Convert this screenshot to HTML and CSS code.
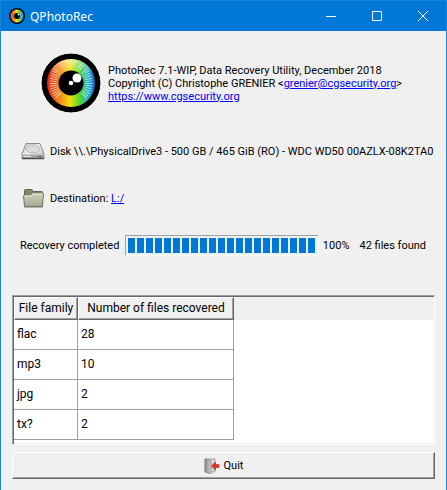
FILE: index.html
```
<!DOCTYPE html>
<html lang="en">
  <head>
    <meta charset="UTF-8">
    <title>QPhotoRec</title>
    <link rel="stylesheet" href="styles.css">
  </head>
  <body>
  <svg width="0" height="0" class="defs">
    <defs>
      <linearGradient id="iris">
        <stop offset="0" stop-color="#e3241c"/>
        <stop offset="0.25" stop-color="#f5821f"/>
        <stop offset="0.48" stop-color="#f2e00c"/>
        <stop offset="0.68" stop-color="#4fd82c"/>
        <stop offset="0.85" stop-color="#22b4c8"/>
        <stop offset="1" stop-color="#2260d0"/>
      </linearGradient>
      <linearGradient id="shine" x2="0" y2="1">
        <stop offset="0" stop-color="#fff" stop-opacity="0.6"/>
        <stop offset="0.3" stop-color="#fff" stop-opacity="0"/>
      </linearGradient>
      <linearGradient id="metal" x2="1" y2="1">
        <stop offset="0" stop-color="#c4c4c4"/>
        <stop offset="0.5" stop-color="#f2f2f2"/>
        <stop offset="1" stop-color="#b4b4b4"/>
      </linearGradient>
      <linearGradient id="folder" x2="0" y2="1">
        <stop offset="0" stop-color="#d2d3bf"/>
        <stop offset="1" stop-color="#a5a78f"/>
      </linearGradient>
      <linearGradient id="door">
        <stop offset="0" stop-color="#8a8a8a"/>
        <stop offset="1" stop-color="#d0d0d0"/>
      </linearGradient>
    </defs>
  </svg>
  <div class="window">
    <header class="titlebar">
      <svg class="app-icon" viewBox="0 0 16 16">
        <circle cx="8" cy="8" r="8" fill="#000"/>
        <circle cx="8" cy="8" r="6.2" fill="url(#iris)" stroke="#fff" stroke-opacity="0.4"/>
        <circle cx="8" cy="8" r="3" fill="#000"/>
        <circle cx="9.6" cy="6.5" r="1" fill="#fff"/>
      </svg>
      <span class="title">QPhotoRec</span>
      <button class="win-btn" aria-label="Minimize"><svg viewBox="0 0 10 10"><path d="M0 5.5h10"/></svg></button>
      <button class="win-btn" aria-label="Maximize"><svg viewBox="0 0 10 10"><path d="M.5.5h9v9h-9z"/></svg></button>
      <button class="win-btn" aria-label="Close"><svg viewBox="0 0 10 10"><path d="M0 0l10 10M10 0L0 10"/></svg></button>
    </header>

    <main>
      <section class="about">
        <svg class="logo" viewBox="0 0 60 60">
          <circle cx="30" cy="30" r="30" fill="#000" stroke="#fff"/>
          <circle cx="30" cy="30" r="24" fill="url(#iris)"/>
          <circle cx="30" cy="30" r="24" fill="url(#shine)"/>
          <!-- iris rays -->
          <g fill="none" stroke="#fff" stroke-opacity="0.75" stroke-width="7" stroke-dasharray="0.7 1.5">
            <path d="M17.3 42.7A18 18 0 0 1 17.3 17.3"/>
            <path d="M42.7 42.7A18 18 0 0 0 42.7 17.3"/>
            <path d="M38 13.900A18 18 0 0 1 41 15.800"/>
          </g>
          <circle cx="30" cy="30" r="12.500" fill="#000"/>
          <circle cx="36" cy="25" r="4.5" fill="#fff"/>
          <circle cx="30" cy="30" r="2.3" fill="#fff"/>
        </svg>
        <p>
          PhotoRec 7.1-WIP, Data Recovery Utility, December 2018<br>
          Copyright (C) Christophe GRENIER &lt;<a href="mailto:grenier@cgsecurity.org">grenier@cgsecurity.org</a>&gt;<br>
          <a href="https://www.cgsecurity.org">https://www.cgsecurity.org</a>
        </p>
      </section>

      <div class="row">
        <svg class="icon" viewBox="0 0 24 24">
          <path d="M5 4.500h14l4 10.500v4.500H1V15z" fill="url(#metal)" stroke="#8c8c8c"/>
          <path d="M1.500 15.500h21v3.500h-21z" fill="#a8a8a8"/>
          <path d="M1 19.500h22" stroke="#4c4c4c" stroke-width="1.500"/>
          <ellipse cx="12" cy="10" rx="7" ry="4" fill="#dedede" stroke="#b6b6b6"/>
          <ellipse cx="12" cy="10" rx="2" ry="1" fill="#fff" stroke="#aaa" stroke-width="0.500"/>
          <path d="M3 17.500h7" stroke="#ececec"/>
          <path d="M17 17.500h4" stroke="#666"/>
        </svg>
        <span>Disk \\.\PhysicalDrive3 - 500 GB / 465 GiB (RO) - WDC WD50 00AZLX-08K2TA0</span>
      </div>

      <div class="row">
        <svg class="icon" viewBox="0 0 24 24">
          <path d="M3.500 20V4.500q0-1 1-1h6q1 0 1 1v1h9q1 0 1 1V20z" fill="#84866f" stroke="#62634f"/>
          <path d="M2.500 10q0-1 1-1h6l2-2h10q1 0 1 1l-1 12.500h-18z" fill="url(#folder)" stroke="#77786a"/>
          <path d="M3.500 10h6.500l2-2h9.500" fill="none" stroke="#e7e8da"/>
          <path d="M3 21.500h19" stroke="#b4b4b0"/>
        </svg>
        <span>Destination: <a href="#">L:/</a></span>
      </div>

      <div class="status">
        <label for="recovery">Recovery completed</label>
        <progress id="recovery" value="100" max="100"></progress>
        <span class="percent">100%</span>
        <span>42 files found</span>
      </div>

      <div class="files">
        <table>
          <thead>
            <tr><th class="family">File family</th><th class="count">Number of files recovered</th><td></td></tr>
          </thead>
          <tbody>
            <tr><td>flac</td><td>28</td></tr>
            <tr><td>mp3</td><td>10</td></tr>
            <tr><td>jpg</td><td>2</td></tr>
            <tr><td>tx?</td><td>2</td></tr>
          </tbody>
        </table>
      </div>

      <button class="quit">
        <svg viewBox="0 0 16 16">
          <path d="M1 1h10v13H1z" fill="#d8d8d8" stroke="#a0a0a0"/>
          <path d="M1 1l6 1.500V16L1 14z" fill="url(#door)" stroke="#777" stroke-width="0.600"/>
          <path d="M7.500 8l4-4v2.500H15v3h-3.500V12z" fill="#e2382b" stroke="#b52318" stroke-width="0.600"/>
        </svg>
        Quit
      </button>
    </main>
  </div>
  </body>
</html>
```
FILE: styles.css
```
* {
  box-sizing: border-box;
}

body {
  margin: 0;
  background-color: #f0f0f0;
  color: #000;
  font-family: Roboto, "Noto Sans", sans-serif;
  font-size: 11px;
  line-height: 13px;
}

a {
  color: #0000ff;
}

.defs {
  position: absolute;
}

.window {
  display: flex;
  flex-direction: column;
  min-height: 100vh;
  border: 1px solid #1883d7;
  background-color: #f0f0f0;
}

.titlebar {
  display: flex;
  align-items: center;
  height: 30px;
  padding-left: 8px;
  background-color: #0078d7;
  color: #fff;
}

.app-icon {
  width: 16px;
  height: 16px;
}

.title {
  flex: 1;
  margin-left: 5px;
  font-family: "Noto Sans", sans-serif;
  font-size: 12px;
}

.win-btn {
  width: 46px;
  height: 30px;
  padding: 0;
  border: 0;
  background: none;
}

.win-btn svg {
  display: block;
  width: 10px;
  height: 10px;
  margin: 0 auto;
  overflow: visible;
  fill: none;
  stroke: #fff;
}

main {
  flex: 1;
  display: flex;
  flex-direction: column;
  padding: 22px 11px 11px;
}

.about {
  display: flex;
  align-items: center;
  gap: 7px;
  padding-left: 29px;
  margin-bottom: 26px;
  white-space: nowrap;
}

.about p {
  margin: 0;
}

.logo {
  flex-shrink: 0;
  width: 60px;
  height: 60px;
  overflow: visible;
}

.row {
  display: flex;
  align-items: center;
  gap: 5px;
  height: 24px;
  padding-left: 9px;
  margin-bottom: 23px;
  white-space: nowrap;
}

.icon {
  flex-shrink: 0;
  width: 24px;
  height: 24px;
}

.status {
  display: flex;
  align-items: center;
  padding: 0 9px 0 8px;
  margin: 2px 0 39px;
  white-space: nowrap;
}

progress {
  appearance: none;
  flex: 1;
  min-width: 0;
  height: 21px;
  margin: 0 4px 0 6px;
  padding: 2px;
  border: 1px solid;
  border-color: #a0a0a0 #fff #fff #a0a0a0;
  background-color: #f0f0f0;
}

progress::-webkit-progress-bar {
  background-color: #f0f0f0;
}

progress::-webkit-progress-value {
  background: repeating-linear-gradient(to right, #0078d7 0 7px, #f0f0f0 7px 9px);
}

.percent {
  margin-right: 10px;
}

.files {
  flex: 1;
  min-height: 150px;
  margin-bottom: 7px;
  border: 1px solid;
  border-color: #a0a0a0 #fff #fff #a0a0a0;
  background-color: #fff;
  box-shadow: inset 1px 1px #696969, inset -1px -1px #f0f0f0;
  padding: 1px;
  font-size: 12px;
}

table {
  width: 100%;
  table-layout: fixed;
  border-spacing: 0;
}

th {
  height: 23px;
  padding: 0;
  border: 1px solid;
  border-color: #fff #696969 #696969 #fff;
  box-shadow: inset -1px -1px #a0a0a0;
  font-weight: normal;
}

thead {
  background-color: #f0f0f0;
}

.family {
  width: 64px;
}

.count {
  width: 156px;
}

tbody td {
  height: 30px;
  padding: 0 3px;
  border-right: 1px solid #a0a0a0;
  border-bottom: 1px solid #a0a0a0;
}

.quit {
  display: flex;
  align-items: center;
  justify-content: center;
  gap: 4px;
  height: 27px;
  border: 1px solid;
  border-color: #fff #696969 #696969 #fff;
  box-shadow: inset -1px -1px #a0a0a0;
  background-color: #f0f0f0;
  font: inherit;
}

.quit svg {
  width: 16px;
  height: 16px;
}
```
